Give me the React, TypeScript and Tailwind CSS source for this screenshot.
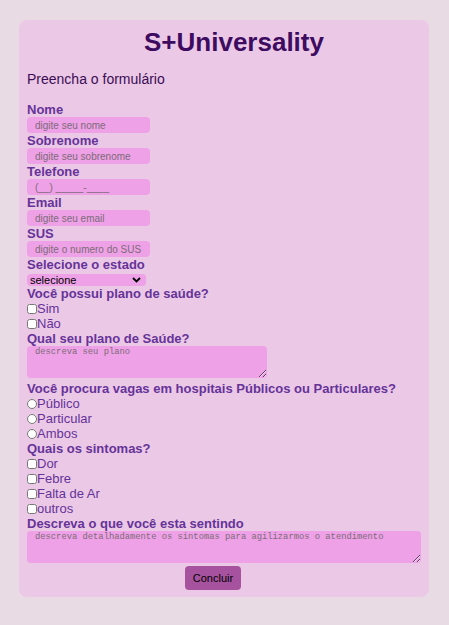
import React from "react";

const font = { fontFamily: '"Liberation Sans", Arial, sans-serif' };

function Field({ label, placeholder }: { label: string; placeholder: string }) {
  return (
    <div>
      <label className="block text-[13px] leading-[15px] font-bold text-[#663399]">{label}</label>
      <input
        type="text"
        placeholder={placeholder}
        className="block w-[123px] h-4 rounded bg-[#eea1e6] px-2 text-[10px] text-black outline-none placeholder:text-[#7d6b78]"
      />
    </div>
  );
}

function Option({ type, name, text }: { type: "checkbox" | "radio"; name: string; text: string }) {
  return (
    <label className="flex items-center h-[15px] text-[13px] leading-[15px] text-[#663399]">
      <input type={type} name={name} className="m-0 w-[10px] h-[10px]" />
      <span>{text}</span>
    </label>
  );
}

export default function App() {
  return (
    <div className="min-h-[625px] bg-[#e8dbe4] pt-5 px-[19px]" style={font}>
      <form className="w-[410px] rounded-lg bg-[#ebc8e6] px-2 pt-[7px] pb-[7px]">
        <h1 className="pl-5 text-center text-[26px] leading-[30px] font-bold text-[#3d0b5f]">S+Universality</h1>
        <h3 className="mt-[14px] text-[14px] leading-4 font-medium text-[#3a0d55]">Preencha o formulário</h3>
        <div className="mt-[15px]">
          <Field label="Nome" placeholder="digite seu nome" />
          <Field label="Sobrenome" placeholder="digite seu sobrenome" />
          <Field label="Telefone" placeholder="(__) _____-____" />
          <Field label="Email" placeholder="digite seu email" />
          <Field label="SUS" placeholder="digite o numero do SUS" />
        </div>
        <label className="block text-[13px] leading-[15px] font-bold text-[#663399]">Selecione o estado</label>
        <div className="relative mt-[2px] w-[119px] h-3">
          <select className="block w-full h-3 appearance-none rounded bg-[#eea1e6] pl-[3px] text-[11px] leading-3 text-black outline-none">
            <option>selecione</option>
          </select>
          <svg
            className="pointer-events-none absolute right-[5px] top-[3px]"
            width="9"
            height="6"
            viewBox="0 0 9 6"
          >
            <path d="M1 1l3.5 3.5L8 1" fill="none" stroke="#000" strokeWidth="1.8" />
          </svg>
        </div>
        <label className="block text-[13px] leading-[15px] font-bold text-[#663399]">Você possui plano de saúde?</label>
        <Option type="checkbox" name="plano" text="Sim" />
        <Option type="checkbox" name="plano" text="Não" />
        <label className="block text-[13px] leading-[15px] font-bold text-[#663399]">Qual seu plano de Saúde?</label>
        <textarea
          placeholder="descreva seu plano"
          className="block w-[240px] h-8 rounded bg-[#eea1e6] px-2 pt-[1px] text-[8.8px] leading-[11px] outline-none placeholder:text-[#7d6b78]"
          style={{ fontFamily: '"Liberation Mono", monospace' }}
        />
        <label className="mt-[3px] block text-[13px] leading-[15px] font-bold text-[#663399]">
          Você procura vagas em hospitais Públicos ou Particulares?
        </label>
        <Option type="radio" name="hosp" text="Público" />
        <Option type="radio" name="hosp" text="Particular" />
        <Option type="radio" name="hosp" text="Ambos" />
        <label className="block text-[13px] leading-[15px] font-bold text-[#663399]">Quais os sintomas?</label>
        <Option type="checkbox" name="s1" text="Dor" />
        <Option type="checkbox" name="s2" text="Febre" />
        <Option type="checkbox" name="s3" text="Falta de Ar" />
        <Option type="checkbox" name="s4" text="outros" />
        <label className="block text-[13px] leading-[15px] font-bold text-[#663399]">Descreva o que você esta sentindo</label>
        <textarea
          placeholder="descreva detalhadamente os sintomas para agilizarmos o atendimento"
          className="block w-full h-8 rounded bg-[#eea1e6] px-2 pt-[1px] text-[8.8px] leading-[11px] outline-none placeholder:text-[#7d6b78]"
          style={{ fontFamily: '"Liberation Mono", monospace' }}
        />
        <button
          type="button"
          className="mt-[3px] ml-[158px] block h-6 w-14 rounded bg-[#a6529e] text-[11px] text-black"
        >
          Concluir
        </button>
      </form>
    </div>
  );
}
